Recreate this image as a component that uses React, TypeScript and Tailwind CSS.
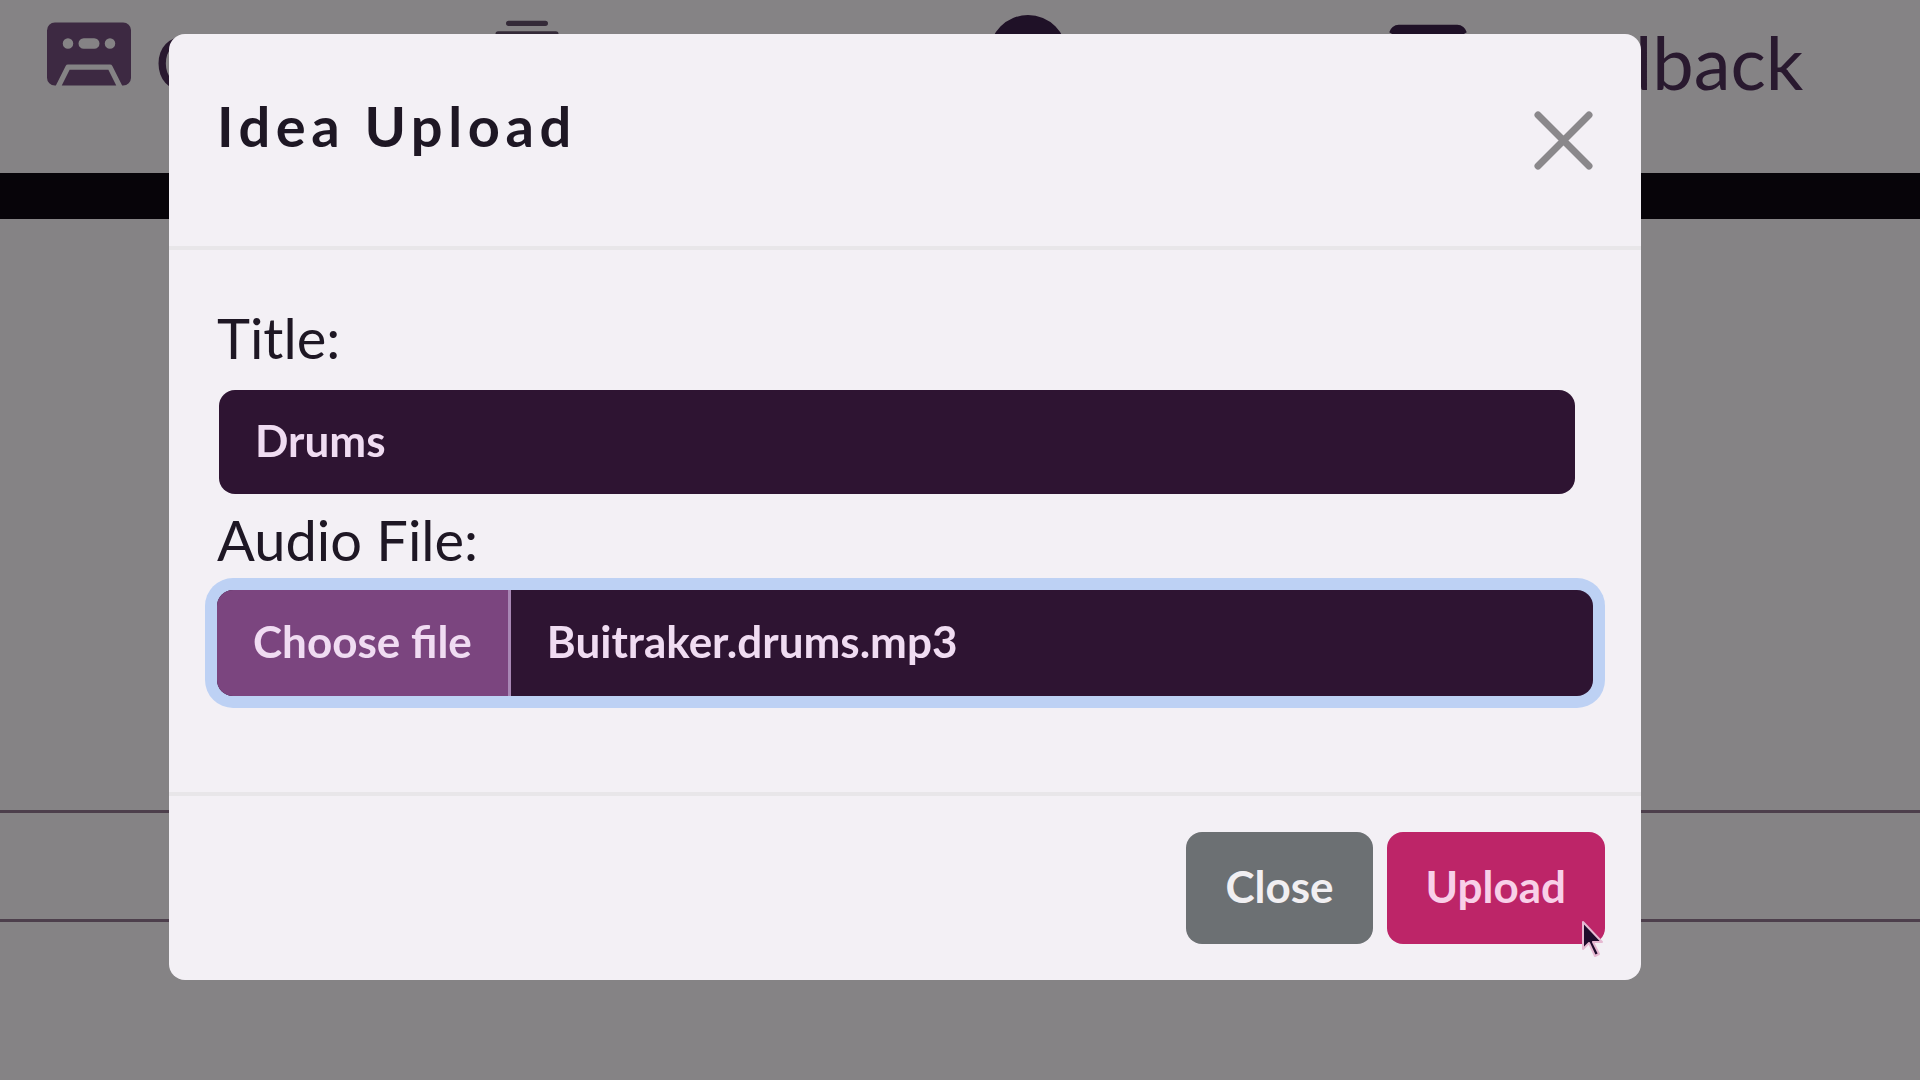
import { useState } from "react";
import { BsCassetteFill, BsCollectionFill, BsEnvelopeFill, BsRecordCircleFill } from "react-icons/bs";

const navItems = [
  { label: "Create", href: "#create", Icon: BsCassetteFill, width: "w-[438px]", icon: "size-[84px] text-[#6f4c78]" },
  { label: "Albums", href: "#albums", Icon: BsCollectionFill, width: "w-[501px]", icon: "mt-3 size-[84px] text-[#5f4e66]" },
  { label: "Tutorial", href: "#tutorial", Icon: BsRecordCircleFill, width: "w-[400px]", icon: "size-[78px] text-[#3a1f48]" },
  { label: "Feedback", href: "#feedback", Icon: BsEnvelopeFill, width: "w-auto", icon: "size-[78px] text-[#3a1f48]" },
];

function Navbar() {
  return (
    <nav className="flex h-[173px] items-start overflow-hidden pl-[47px] pt-3">
      {navItems.map(({ label, href, Icon, width, icon }) => (
        <a key={label} href={href} className={`flex shrink-0 items-start gap-6 text-[#4c2f57] ${width}`}>
          <span className="flex size-[84px] shrink-0 items-center justify-center">
            <Icon className={`shrink-0 ${icon}`} aria-hidden="true" />
          </span>
          <span className="text-[74px] leading-[100px]">{label}</span>
        </a>
      ))}
    </nav>
  );
}

function Cursor() {
  return (
    <svg className="pointer-events-none absolute -bottom-4 right-0 h-[40px] w-[26px]" viewBox="0 0 26 40" aria-hidden="true">
      <path d="M4 2v27l6-6 6 13 4-2-6-12h9z" fill="#1f0c2c" stroke="#e6b9d2" strokeWidth="2" strokeLinejoin="round" />
    </svg>
  );
}

function UploadModal() {
  const [title, setTitle] = useState("Drums");
  const [fileName, setFileName] = useState("Buitraker.drums.mp3");

  return (
    <div className="fixed inset-0 overflow-y-auto bg-black/45 pl-[169px] pr-[279px] pt-[34px]">
      <form
        role="dialog"
        aria-labelledby="modal-title"
        onSubmit={(e) => e.preventDefault()}
        className="rounded-2xl bg-[#f3f0f5] text-[#1e1724]"
      >
        <div className="flex h-[216px] items-start justify-between border-b-4 border-[#e8e6e9] px-12 pt-14">
          <h2 id="modal-title" className="text-[56px] font-bold leading-[72px] tracking-widest">
            Idea Upload
          </h2>
          <button type="button" aria-label="Dismiss" className="mt-5 text-[#8a888b]">
            <svg className="size-[60px]" viewBox="0 0 60 60" fill="none" stroke="currentColor" strokeWidth="7" strokeLinecap="round">
              <path d="M5 5l51 51M56 5L5 56" />
            </svg>
          </button>
        </div>

        {/* Fields */}
        <div className="px-12 pb-24 pt-13">
          <label htmlFor="title" className="block text-[56px] leading-[72px]">
            Title:
          </label>
          <div className="pl-[2px] pr-[18px] pt-4">
            <input
              id="title"
              type="text"
              value={title}
              onChange={(e) => setTitle(e.target.value)}
              className="block h-[104px] w-full rounded-2xl bg-[#2e1432] px-9 pb-1 text-[44px] font-bold text-[#f0dcf2] outline-none"
            />
          </div>

          <label htmlFor="audio" className="mt-[10px] block text-[56px] leading-[72px]">
            Audio File:
          </label>
          <label
            htmlFor="audio"
            className="mt-[14px] flex h-[106px] cursor-pointer items-stretch overflow-hidden rounded-2xl bg-[#2e1432] text-[44px] font-bold text-[#f0dcf2] ring-12 ring-[#bdd1f4]"
          >
            <span className="flex items-center border-r-3 border-[#a887b5] bg-[#7b457f] px-9 pb-1">Choose file</span>
            <span className="flex items-center px-9 pb-1">{fileName}</span>
            <input
              id="audio"
              type="file"
              accept="audio/*"
              className="sr-only"
              onChange={(e) => setFileName(e.target.files?.[0]?.name ?? fileName)}
            />
          </label>
        </div>

        <div className="flex justify-end gap-[14px] border-t-4 border-[#e8e6e9] px-9 py-9">
          <button type="button" className="h-[112px] rounded-2xl bg-[#6c7073] px-[39px] pb-1 text-[44px] font-bold text-[#f1eff2]">
            Close
          </button>
          <div className="relative">
            <button type="submit" className="h-[112px] rounded-2xl bg-[#bd2568] px-[39px] pb-1 text-[44px] font-bold text-[#f8d0e8]">
              Upload
            </button>
            <Cursor />
          </div>
        </div>
      </form>
    </div>
  );
}

export default function App() {
  return (
    <div className="min-h-screen bg-[#f2eef2] font-['Lato',sans-serif]">
      <Navbar />
      <div className="h-[46px] bg-[#0e0912]" />
      <main className="pt-[591px]">
        <div className="h-[112px] border-y-3 border-[#8c748a]" />
      </main>
      <UploadModal />
    </div>
  );
}
